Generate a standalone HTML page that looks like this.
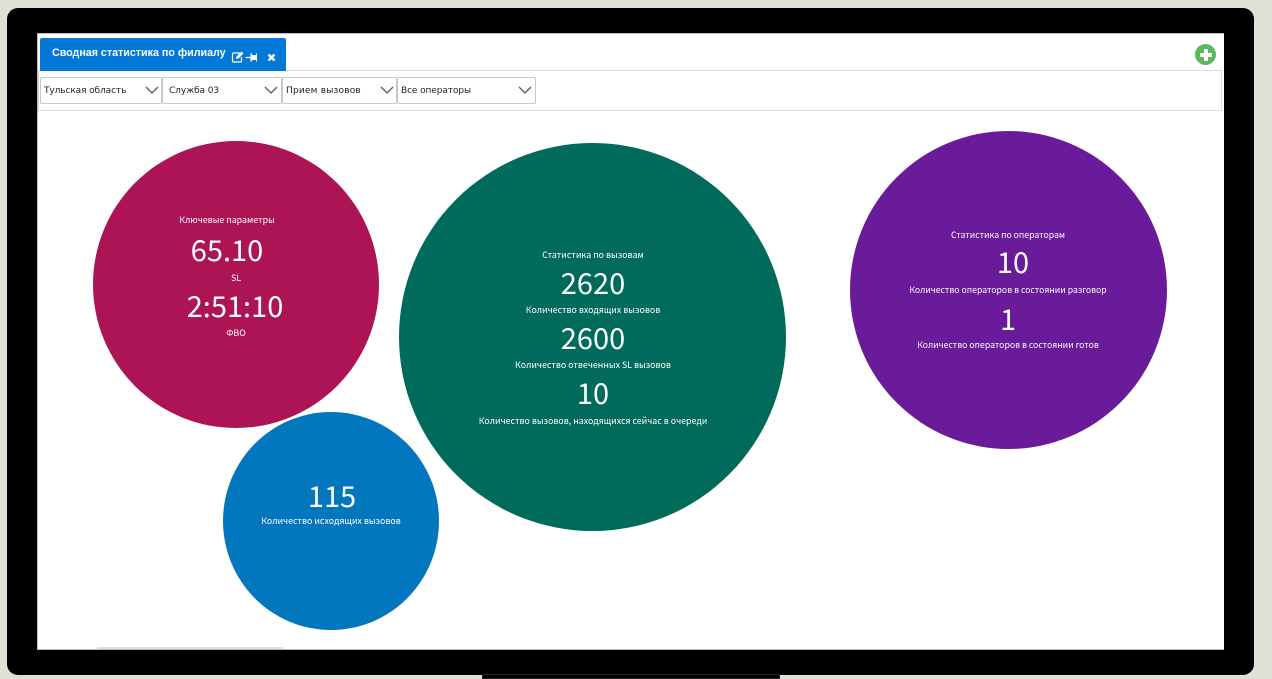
<!DOCTYPE html>
<html><head><meta charset="utf-8"><style>
html,body{margin:0;padding:0;width:1272px;height:679px;overflow:hidden;background:#dfe1d6;font-family:"Noto Sans CJK JP","Liberation Sans",sans-serif}
div{position:absolute;box-sizing:border-box}
.c{border-radius:50%}
.t{color:#fff;white-space:nowrap;transform:translateX(-50%);text-align:center;line-height:1}
.s{font-size:8.85px;font-family:"Noto Sans CJK JP",sans-serif;margin-top:.5px}
.n{font-size:29px;font-family:"Noto Sans CJK JP",sans-serif;margin-top:-.5px}
.sel{top:77px;height:27px;background:#fff;border:1px solid #c8c8c8;border-radius:2px;font-size:9px;line-height:26px;padding-left:3px;color:#222;font-family:"DejaVu Sans",sans-serif;letter-spacing:-.1px}
.sel svg{position:absolute;top:7px}
</style></head><body>
<div style="left:7px;top:8px;width:1247px;height:667px;background:#000;border-radius:11px"></div>
<div style="left:482px;top:674px;width:298px;height:5px;background:#000;border:1px solid #222"></div>
<div style="left:37px;top:33px;width:1187px;height:617px;background:#fff;border:1px solid #bbb;border-width:1px 0 1px 1px"></div>
<div style="left:97px;top:647px;width:186px;height:2px;background:#ddd"></div>
<div style="left:38px;top:70px;width:1184px;height:41px;border:1px solid #ddd;background:#fff"></div>
<div style="left:40px;top:38px;width:246px;height:33px;background:#0478d7;border-radius:2px 2px 0 0"></div>
<div style="left:52px;top:46px;color:#fff;font:bold 10.7px/14px 'Liberation Sans',sans-serif;white-space:nowrap">Сводная статистика по филиалу</div>
<svg style="position:absolute;left:231px;top:50px" width="46" height="14" viewBox="0 0 46 14" fill="none">
<path d="M9 3H2.500A1 1 0 0 0 1.500 4V11A1 1 0 0 0 2.500 12H9.500A1 1 0 0 0 10.500 11V7" stroke="#fff" stroke-width="1.200"/>
<path d="M5 9L5.500 6.500L10.500 1.500L12.500 3.500L7.500 8.500Z" fill="#fff"/>
<path d="M14.500 7.500H20" stroke="#fff" stroke-width="1.300"/><path d="M19.500 3.500H21V5H25V3.500H26V11.500H25V10H21V11.500H19.500Z" fill="#fff"/>
<path d="M37.500 4.500L43.500 10.500M43.500 4.500L37.500 10.500" stroke="#fff" stroke-width="2.400"/>
</svg>
<div class="c" style="left:1195px;top:44px;width:21px;height:21px;background:#5cb85c"></div>
<div style="left:1204px;top:49px;width:4px;height:12px;background:#fff"></div>
<div style="left:1200px;top:53px;width:12px;height:4px;background:#fff"></div>

<div class="sel" style="left:40px;width:122px">Тульская область<svg style="left:104px" width="14" height="10" fill="none"><path d="M1 2L7 8L13 2" stroke="#666" stroke-width="1.500"/></svg></div>
<div class="sel" style="left:162px;width:120px;padding-left:6px">Служба 03<svg style="left:101px" width="14" height="10" fill="none"><path d="M1 2L7 8L13 2" stroke="#666" stroke-width="1.500"/></svg></div>
<div class="sel" style="left:282px;width:115px;letter-spacing:.2px">Прием вызовов<svg style="left:97px" width="14" height="10" fill="none"><path d="M1 2L7 8L13 2" stroke="#666" stroke-width="1.500"/></svg></div>
<div class="sel" style="left:397px;width:139px">Все операторы<svg style="left:120px" width="14" height="10" fill="none"><path d="M1 2L7 8L13 2" stroke="#666" stroke-width="1.500"/></svg></div>

<div class="c" style="left:93px;top:141px;width:286px;height:287px;background:#ad1455"></div>
<div class="c" style="left:399px;top:143px;width:387px;height:388px;background:#006b5b"></div>
<div class="c" style="left:850px;top:131px;width:317px;height:318px;background:#6a1b9a"></div>
<div class="c" style="left:223px;top:412px;width:216px;height:218px;background:#0277bd"></div>

<div class="t s" style="left:227px;top:215px">Ключевые параметры</div>
<div class="t n" style="left:227px;top:235px">65.10</div>
<div class="t s" style="left:236px;top:273px">SL</div>
<div class="t n" style="left:235px;top:291px">2:51:10</div>
<div class="t s" style="left:236px;top:328px">ФВО</div>

<div class="t s" style="left:593px;top:250px">Статистика по вызовам</div>
<div class="t n" style="left:593px;top:268px">2620</div>
<div class="t s" style="left:593px;top:305px">Количество входящих вызовов</div>
<div class="t n" style="left:593px;top:323px">2600</div>
<div class="t s" style="left:593px;top:360px">Количество отвеченных SL вызовов</div>
<div class="t n" style="left:593px;top:378px">10</div>
<div class="t s" style="left:593px;top:416px">Количество вызовов, находящихся сейчас в очереди</div>

<div class="t s" style="left:1008px;top:230px;font-size:8.7px">Статистика по операторам</div>
<div class="t n" style="left:1013px;top:247px">10</div>
<div class="t s" style="left:1008px;top:285px;font-size:8.7px">Количество операторов в состоянии разговор</div>
<div class="t n" style="left:1008px;top:304px">1</div>
<div class="t s" style="left:1008px;top:340px;font-size:8.7px">Количество операторов в состоянии готов</div>

<div class="t n" style="left:332px;top:481px">115</div>
<div class="t s" style="left:331px;top:516px">Количество исходящих вызовов</div>
</body></html>
